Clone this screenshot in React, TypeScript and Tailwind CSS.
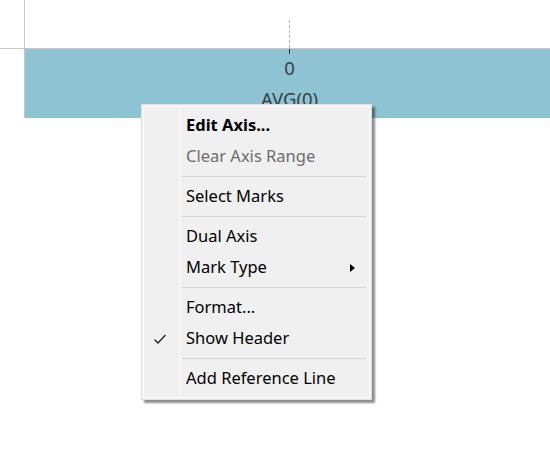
import React from "react";

const font = { fontFamily: '"Noto Sans", "Open Sans", sans-serif' };

function Item({ label, bold, disabled, check, arrow }: { label: string; bold?: boolean; disabled?: boolean; check?: boolean; arrow?: boolean }) {
  return (
    <div className="flex h-[31px] items-center">
      <div className="flex w-[35px] shrink-0 items-center justify-center self-stretch pr-[4px]">
        {check && (
          <svg width="14" height="12" viewBox="0 0 14 12">
            <path d="M1.5 6.5 L5 10 L12.5 2" fill="none" stroke="#222" strokeWidth="1.3" />
          </svg>
        )}
      </div>
      <div className="w-px self-stretch bg-white" />
      <div className={`flex flex-1 items-center pl-[6px] pr-[14px] text-[16.5px] ${bold ? "font-bold text-black" : disabled ? "text-[#6d6d6d]" : "text-black"}`}>
        <span className="flex-1 leading-none">{label}</span>
        {arrow && (
          <svg width="5" height="8" viewBox="0 0 5 8">
            <path d="M0 0 L5 4 L0 8 Z" fill="#000" />
          </svg>
        )}
      </div>
    </div>
  );
}

function Sep() {
  return (
    <div className="flex h-[9px] items-center">
      <div className="w-[35px] shrink-0 self-stretch" />
      <div className="w-px self-stretch bg-white" />
      <div className="ml-[2px] mr-[3px] h-px flex-1 bg-[#d5d5d5]" />
    </div>
  );
}

export default function App() {
  return (
    <div className="relative h-[467px] w-[550px] overflow-hidden bg-white" style={font}>
      <div className="flex h-[48px]">
        <div className="w-[25px] border-r border-[#c8c8c8]" />
        <div className="flex flex-1 justify-center pl-[4px]">
          <div className="mt-[20px] h-[28px] border-l border-dashed border-[#b5b5b5]" />
        </div>
      </div>
      <div className="h-px bg-[#c8c8c8]" />
      <div className="flex h-[69px]">
        <div className="w-[25px] border-r border-[#c8c8c8]" />
        <div className="flex flex-1 flex-col items-center bg-[#8dc3d3] pl-[4px] text-[#3a3f44]">
          <div className="h-[5px] w-px bg-[#333]" />
          <div className="mt-[4px] text-[18.5px] leading-[20px]">0</div>
          <div className="mt-[11px] text-[18.5px] leading-[20px]">AVG(0)</div>
        </div>
      </div>

      <div className="absolute left-[141px] top-[104px] w-[231px] border border-[#e3e3e3] bg-[#f0f0f0] p-px shadow-[3px_3px_2px_rgba(0,0,0,0.45)]">
        <div className="border border-[#fafafa] bg-[#f0f0f0] py-[3px]">
          <Item label="Edit Axis..." bold />
          <Item label="Clear Axis Range" disabled />
          <Sep />
          <Item label="Select Marks" />
          <Sep />
          <Item label="Dual Axis" />
          <Item label="Mark Type" arrow />
          <Sep />
          <Item label="Format..." />
          <Item label="Show Header" check />
          <Sep />
          <Item label="Add Reference Line" />
        </div>
      </div>
    </div>
  );
}
